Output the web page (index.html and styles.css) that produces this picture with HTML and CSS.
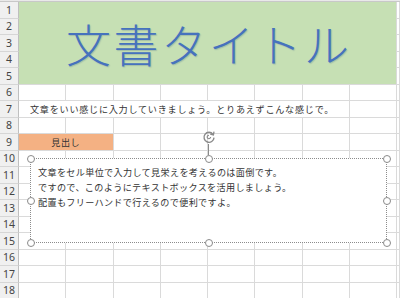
FILE: index.html
```html
<!DOCTYPE html>
<html lang="ja">
<head>
<meta charset="UTF-8">
<meta name="viewport" content="width=device-width, initial-scale=1.0">
<title>Sheet1</title>
<link rel="stylesheet" href="styles.css">
</head>
<body>
<div class="colhead"></div>
<div class="sheet">
    <!-- rows 1-5 : merged title -->
    <div class="rh">1</div><div class="c title">文書タイトル</div><div class="c"></div>
    <div class="rh">2</div><div class="c"></div>
    <div class="rh">3</div><div class="c"></div>
    <div class="rh">4</div><div class="c"></div>
    <div class="rh">5</div><div class="c"></div>

    <div class="rh">6</div><div class="c"></div><div class="c"></div><div class="c"></div><div class="c"></div><div class="c"></div><div class="c"></div><div class="c"></div><div class="c"></div><div class="c"></div>
    <div class="rh">7</div><div class="c line">文章をいい感じに入力していきましょう。とりあえずこんな感じで。</div><div class="c"></div><div class="c"></div>
    <div class="rh">8</div><div class="c"></div><div class="c"></div><div class="c"></div><div class="c"></div><div class="c"></div><div class="c"></div><div class="c"></div><div class="c"></div><div class="c"></div>
    <div class="rh">9</div><div class="c midashi">見出し</div><div class="c"></div><div class="c"></div><div class="c"></div><div class="c"></div><div class="c"></div><div class="c"></div><div class="c"></div>
    <div class="rh">10</div><div class="c"></div><div class="c"></div><div class="c"></div><div class="c"></div><div class="c"></div><div class="c"></div><div class="c"></div><div class="c"></div><div class="c"></div>
    <div class="rh">11</div><div class="c"></div><div class="c"></div><div class="c"></div><div class="c"></div><div class="c"></div><div class="c"></div><div class="c"></div><div class="c"></div><div class="c"></div>
    <div class="rh">12</div><div class="c"></div><div class="c"></div><div class="c"></div><div class="c"></div><div class="c"></div><div class="c"></div><div class="c"></div><div class="c"></div><div class="c"></div>
    <div class="rh">13</div><div class="c"></div><div class="c"></div><div class="c"></div><div class="c"></div><div class="c"></div><div class="c"></div><div class="c"></div><div class="c"></div><div class="c"></div>
    <div class="rh">14</div><div class="c"></div><div class="c"></div><div class="c"></div><div class="c"></div><div class="c"></div><div class="c"></div><div class="c"></div><div class="c"></div><div class="c"></div>
    <div class="rh">15</div><div class="c"></div><div class="c"></div><div class="c"></div><div class="c"></div><div class="c"></div><div class="c"></div><div class="c"></div><div class="c"></div><div class="c"></div>
    <div class="rh">16</div><div class="c"></div><div class="c"></div><div class="c"></div><div class="c"></div><div class="c"></div><div class="c"></div><div class="c"></div><div class="c"></div><div class="c"></div>
    <div class="rh">17</div><div class="c"></div><div class="c"></div><div class="c"></div><div class="c"></div><div class="c"></div><div class="c"></div><div class="c"></div><div class="c"></div><div class="c"></div>
    <div class="rh">18</div><div class="c"></div><div class="c"></div><div class="c"></div><div class="c"></div><div class="c"></div><div class="c"></div><div class="c"></div><div class="c"></div><div class="c"></div>

    <!-- selected text box -->
    <div class="textbox">
        <p>文章をセル単位で入力して見栄えを考えるのは面倒です。</p>
        <p>ですので、このようにテキストボックスを活用しましょう。</p>
        <p>配置もフリーハンドで行えるので便利ですよ。</p>

        <div class="rotate">
            <svg width="14" height="14" viewBox="0 0 14 14">
                <path d="M11 4.3 A5 5 0 1 0 12 7.6" fill="none" stroke="#8a8a8a" stroke-width="1.4"/>
                <path d="M12 1.6 L11.4 4.9 L8.2 4.2" fill="none" stroke="#8a8a8a" stroke-width="1.3"/>
                <path d="M8.6 7 A1.7 1.7 0 1 1 7 5.3" fill="none" stroke="#8a8a8a" stroke-width="1.1"/>
            </svg>
            <span class="stem"></span>
        </div>
        <span class="h tl"></span><span class="h tm"></span><span class="h tr"></span>
        <span class="h ml"></span><span class="h mr"></span>
        <span class="h bl"></span><span class="h bm"></span><span class="h br"></span>
    </div>
</div>
</body>
</html>
```

FILE: styles.css
```css
*{
    box-sizing: border-box;
}
body{
    margin: 0;
    background: #ffffff;
    font-family: "Noto Sans CJK JP", "Noto Sans", sans-serif;
    overflow: hidden;
}
.colhead{
    height: 2px;
    background: #e9e9e9;
    border-bottom: 1px solid #c8c8c8;
}
.sheet{
    position: relative;
    display: grid;
    grid-template-columns: 19px repeat(8, 47.25px) 1fr;
    grid-auto-rows: 16.5px;
}
.rh{
    background: #f0f0f0;
    border-right: 1px solid #bfbfbf;
    border-bottom: 1px solid #d6d6d6;
    color: #444444;
    font-family: "Noto Sans", sans-serif;
    font-size: 10.5px;
    display: flex;
    align-items: center;
    justify-content: center;
}
.c{
    border-right: 1px solid #dadada;
    border-bottom: 1px solid #dadada;
}
.title{
    grid-column: span 8;
    grid-row: span 5;
    background: #c6e0b4;
    display: flex;
    align-items: center;
    justify-content: center;
    color: #4672bd;
    font-size: 45px;
    font-weight: 300;
    letter-spacing: 2.6px;
    padding-left: 2.6px;
    padding-top: 1px;
    text-shadow: 1px 1px 1px rgba(60, 90, 140, 0.25);
}
.line{
    grid-column: span 7;
    display: flex;
    align-items: center;
    padding-left: 11px;
    white-space: nowrap;
    font-size: 9.1px;
    letter-spacing: 0.75px;
    color: #333333;
}
.midashi{
    grid-column: span 2;
    background: #f4b183;
    display: flex;
    align-items: center;
    justify-content: center;
    font-size: 9.1px;
    letter-spacing: 0.6px;
    color: #333333;
}
.textbox{
    position: absolute;
    left: 30px;
    top: 156px;
    width: 357px;
    height: 85px;
    background: #ffffff;
    border: 1px dotted #8c8c8c;
    padding: 6px 0 0 7px;
    font-size: 9.1px;
    letter-spacing: 0.35px;
    line-height: 15px;
    color: #333333;
}
.textbox p{
    margin: 0;
    white-space: nowrap;
}
.h{
    position: absolute;
    width: 8px;
    height: 8px;
    border: 1px solid #8a8a8a;
    border-radius: 50%;
    background: #ffffff;
}
.tl, .tm, .tr{ top: -4.5px; }
.bl, .bm, .br{ bottom: -4.5px; }
.ml, .mr{ top: calc(50% - 4px); }
.tl, .ml, .bl{ left: -4.5px; }
.tr, .mr, .br{ right: -4.5px; }
.tm, .bm{ left: calc(50% - 4px); }
.rotate{
    position: absolute;
    left: calc(50% - 7px);
    top: -29px;
    width: 14px;
    display: flex;
    flex-direction: column;
    align-items: center;
}
.stem{
    width: 1px;
    height: 11px;
    background: #8a8a8a;
}
```
